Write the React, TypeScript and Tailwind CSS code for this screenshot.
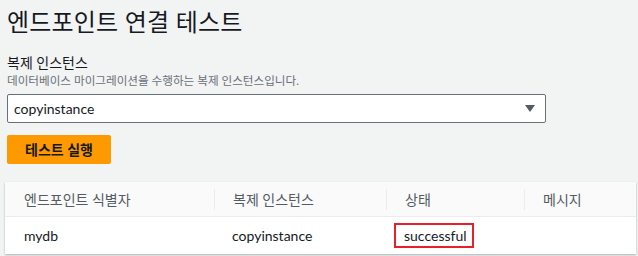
export default function App() {
  return (
    <div className="min-h-screen w-[638px] h-[256px] overflow-hidden bg-[#f2f3f3] text-[#16191f] font-['Lato','Noto_Sans_CJK_KR',sans-serif]">
      <div className="pl-[7px] pt-[2px]">
        <h1 className="text-[24px] leading-[40px] font-normal tracking-[0.2px]">엔드포인트 연결 테스트</h1>
        <div className="mt-[12px] text-[14px] leading-[18px]">복제 인스턴스</div>
        <div className="text-[11.6px] leading-[17px] text-[#687078]">데이터베이스 마이그레이션을 수행하는 복제 인스턴스입니다.</div>
        <div className="mt-[5px] w-[539px] h-[29px] bg-white border border-[#687078] rounded-[2px] flex items-center justify-between pl-[6px] pr-[10px]">
          <span className="text-[14px]">copyinstance</span>
          <svg width="10" height="8" viewBox="0 0 10 8">
            <path d="M0 0 H10 L5 7 Z" fill="#545b64" />
          </svg>
        </div>
        <button className="mt-[12px] w-[104px] h-[29px] bg-[#ff9900] rounded-[2px] text-[14px] font-bold text-[#16191f]">
          테스트 실행
        </button>
      </div>
      <div className="mt-[18px] ml-[5px] w-[631px] bg-white shadow-[0_1px_2px_rgba(0,28,36,0.3)]">
        <div className="grid grid-cols-[209px_172px_138px_112px] h-[35px] bg-[#fafafa] border-b border-[#eaeded] text-[14px] text-[#545b64]">
          <div className="flex items-center pl-[19px]">엔드포인트 식별자</div>
          <div className="flex items-center pl-[18px] border-l border-[#eaeded] my-[7px]">복제 인스턴스</div>
          <div className="flex items-center pl-[18px] border-l border-[#eaeded] my-[7px]">상태</div>
          <div className="flex items-center pl-[18px] border-l border-[#eaeded] my-[7px]">메시지</div>
        </div>
        <div className="grid grid-cols-[209px_172px_138px_112px] h-[37px] text-[14px] text-[#16191f]">
          <div className="flex items-center pl-[19px]">mydb</div>
          <div className="flex items-center pl-[18px]">copyinstance</div>
          <div className="flex items-center pl-[8px]">
            <span className="border-2 border-[#e8202a] h-[25px] w-[80px] flex items-center pl-[8px]">successful</span>
          </div>
          <div></div>
        </div>
      </div>
    </div>
  )
}
